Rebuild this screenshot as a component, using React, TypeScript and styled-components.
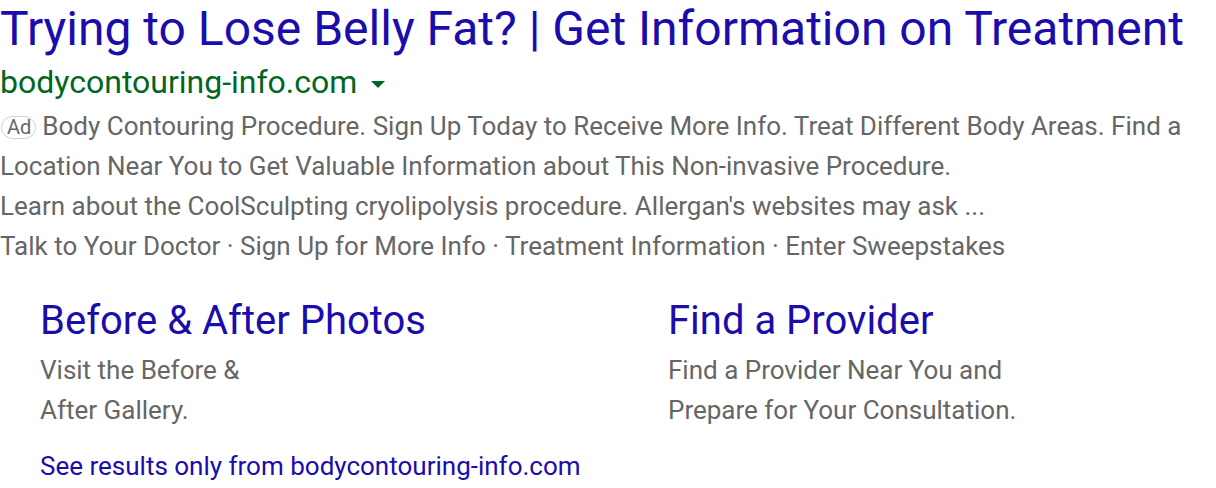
import React from "react";
import styled, { createGlobalStyle } from "styled-components";

const Global = createGlobalStyle`
  html, body { margin: 0; padding: 0; background: #fff; }
  body { font-family: Roboto, "Noto Sans", Arial, sans-serif; }
`;

const Ad = styled.div`
  display: flex;
  flex-direction: column;
  width: 1216px;
`;

const Title = styled.a`
  display: block;
  font-size: 48px;
  line-height: 58px;
  color: #1a0dab;
  text-decoration: none;
  white-space: nowrap;
`;

const UrlRow = styled.div`
  display: flex;
  align-items: center;
  height: 48px;
  font-size: 32px;
  color: #006621;
`;

const Caret = styled.span`
  width: 0;
  height: 0;
  margin-left: 14px;
  margin-top: 4px;
  border-left: 7px solid transparent;
  border-right: 7px solid transparent;
  border-top: 7px solid #006621;
`;

const Desc = styled.div`
  font-size: 26px;
  line-height: 40px;
  color: #666;
  white-space: nowrap;
`;

const Badge = styled.span`
  display: inline-block;
  box-sizing: border-box;
  height: 23px;
  font-size: 20px;
  line-height: 21px;
  padding: 0 4px 0 5px;
  margin-left: 1px;
  border: 1px solid #cfcfcf;
  border-radius: 12px;
  color: #666;
  margin-right: 6px;
  vertical-align: 1px;
`;

const Sitelinks = styled.div`
  display: grid;
  grid-template-columns: 628px 1fr;
  padding-left: 40px;
  margin-top: 26px;
`;

const Sitelink = styled.div`
  display: flex;
  flex-direction: column;
`;

const SitelinkTitle = styled.a`
  font-size: 40px;
  line-height: 58px;
  color: #1a0dab;
  text-decoration: none;
`;

const SitelinkDesc = styled.div`
  font-size: 26px;
  line-height: 40px;
  color: #666;
`;

const More = styled.a`
  display: block;
  margin: 16px 0 0 40px;
  font-size: 26px;
  line-height: 40px;
  color: #1a0dab;
  text-decoration: none;
`;

export default function App() {
  return (
    <>
      <Global />
      <Ad>
        <Title href="#">Trying to Lose Belly Fat? | Get Information on Treatment</Title>
        <UrlRow>
          bodycontouring-info.com
          <Caret />
        </UrlRow>
        <Desc>
          <Badge>Ad</Badge>Body Contouring Procedure. Sign Up Today to Receive More Info. Treat Different Body Areas. Find a
          <br />
          Location Near You to Get Valuable Information about This Non-invasive Procedure.
          <br />
          Learn about the CoolSculpting cryolipolysis procedure. Allergan's websites may ask ...
          <br />
          Talk to Your Doctor · Sign Up for More Info · Treatment Information · Enter Sweepstakes
        </Desc>
        <Sitelinks>
          <Sitelink>
            <SitelinkTitle href="#">Before &amp; After Photos</SitelinkTitle>
            <SitelinkDesc>
              Visit the Before &amp;
              <br />
              After Gallery.
            </SitelinkDesc>
          </Sitelink>
          <Sitelink>
            <SitelinkTitle href="#">Find a Provider</SitelinkTitle>
            <SitelinkDesc>
              Find a Provider Near You and
              <br />
              Prepare for Your Consultation.
            </SitelinkDesc>
          </Sitelink>
        </Sitelinks>
        <More href="#">See results only from bodycontouring-info.com</More>
      </Ad>
    </>
  );
}
